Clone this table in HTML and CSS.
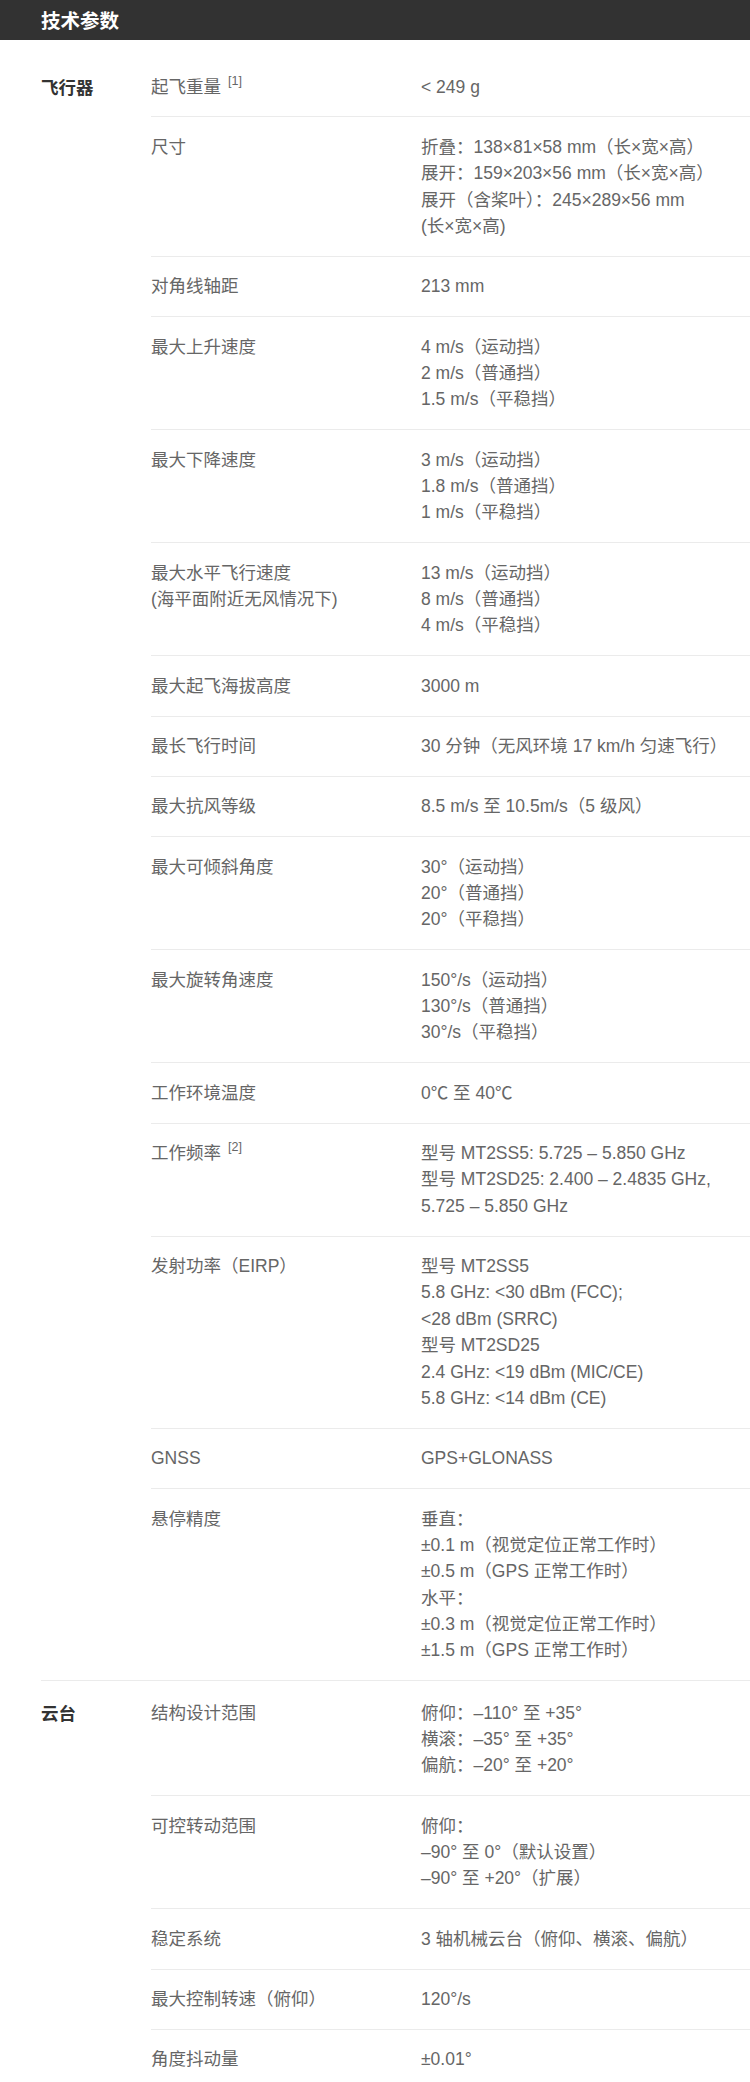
FILE: index.html
```html
<!DOCTYPE html>
<html lang="zh-cn">

<head>
    <meta charset="UTF-8">
    <meta name="viewport" content="width=device-width, initial-scale=1.0">
    <title>技术参数</title>
    <link rel="stylesheet" href="styles.css">
</head>

<body>
    <header class="specHead">技术参数</header>

    <div class="specBody">
        <!-- 飞行器 -->
        <section class="specGroup">
            <h3 class="groupName">飞行器</h3>
            <ul class="specList">
                <li>
                    <span class="specKey">起飞重量<sup>[1]</sup></span>
                    <span class="specVal">&lt; 249 g</span>
                </li>
                <li>
                    <span class="specKey">尺寸</span>
                    <span class="specVal">折叠：138×81×58 mm（长×宽×高）<br>展开：159×203×56 mm（长×宽×高）<br>展开（含桨叶）：245×289×56 mm<br>(长×宽×高)</span>
                </li>
                <li>
                    <span class="specKey">对角线轴距</span>
                    <span class="specVal">213 mm</span>
                </li>
                <li>
                    <span class="specKey">最大上升速度</span>
                    <span class="specVal">4 m/s（运动挡）<br>2 m/s（普通挡）<br>1.5 m/s（平稳挡）</span>
                </li>
                <li>
                    <span class="specKey">最大下降速度</span>
                    <span class="specVal">3 m/s（运动挡）<br>1.8 m/s（普通挡）<br>1 m/s（平稳挡）</span>
                </li>
                <li>
                    <span class="specKey">最大水平飞行速度<br>(海平面附近无风情况下)</span>
                    <span class="specVal">13 m/s（运动挡）<br>8 m/s（普通挡）<br>4 m/s（平稳挡）</span>
                </li>
                <li>
                    <span class="specKey">最大起飞海拔高度</span>
                    <span class="specVal">3000 m</span>
                </li>
                <li>
                    <span class="specKey">最长飞行时间</span>
                    <span class="specVal">30 分钟（无风环境 17 km/h 匀速飞行）</span>
                </li>
                <li>
                    <span class="specKey">最大抗风等级</span>
                    <span class="specVal">8.5 m/s 至 10.5m/s（5 级风）</span>
                </li>
                <li>
                    <span class="specKey">最大可倾斜角度</span>
                    <span class="specVal">30°（运动挡）<br>20°（普通挡）<br>20°（平稳挡）</span>
                </li>
                <li>
                    <span class="specKey">最大旋转角速度</span>
                    <span class="specVal">150°/s（运动挡）<br>130°/s（普通挡）<br>30°/s（平稳挡）</span>
                </li>
                <li>
                    <span class="specKey">工作环境温度</span>
                    <span class="specVal">0℃ 至 40℃</span>
                </li>
                <li>
                    <span class="specKey">工作频率<sup>[2]</sup></span>
                    <span class="specVal">型号 MT2SS5: 5.725 – 5.850 GHz<br>型号 MT2SD25: 2.400 – 2.4835 GHz,<br>5.725 – 5.850 GHz</span>
                </li>
                <li>
                    <span class="specKey">发射功率（EIRP）</span>
                    <span class="specVal">型号 MT2SS5<br>5.8 GHz: &lt;30 dBm (FCC);<br>&lt;28 dBm (SRRC)<br>型号 MT2SD25<br>2.4 GHz: &lt;19 dBm (MIC/CE)<br>5.8 GHz: &lt;14 dBm (CE)</span>
                </li>
                <li>
                    <span class="specKey">GNSS</span>
                    <span class="specVal">GPS+GLONASS</span>
                </li>
                <li>
                    <span class="specKey">悬停精度</span>
                    <span class="specVal">垂直：<br>±0.1 m（视觉定位正常工作时）<br>±0.5 m（GPS 正常工作时）<br>水平：<br>±0.3 m（视觉定位正常工作时）<br>±1.5 m（GPS 正常工作时）</span>
                </li>
            </ul>
        </section>

        <!-- 云台 -->
        <section class="specGroup">
            <h3 class="groupName">云台</h3>
            <ul class="specList">
                <li>
                    <span class="specKey">结构设计范围</span>
                    <span class="specVal">俯仰：–110° 至 +35°<br>横滚：–35° 至 +35°<br>偏航：–20° 至 +20°</span>
                </li>
                <li>
                    <span class="specKey">可控转动范围</span>
                    <span class="specVal">俯仰：<br>–90° 至 0°（默认设置）<br>–90° 至 +20°（扩展）</span>
                </li>
                <li>
                    <span class="specKey">稳定系统</span>
                    <span class="specVal">3 轴机械云台（俯仰、横滚、偏航）</span>
                </li>
                <li>
                    <span class="specKey">最大控制转速（俯仰）</span>
                    <span class="specVal">120°/s</span>
                </li>
                <li>
                    <span class="specKey">角度抖动量</span>
                    <span class="specVal">±0.01°</span>
                </li>
            </ul>
        </section>
    </div>
</body>

</html>
```

FILE: styles.css
```css
* {
    margin: 0;
    padding: 0;
    box-sizing: border-box;
}

body {
    background-color: #fff;
    font-family: "Liberation Sans", "Noto Sans CJK SC", sans-serif;
    color: #666;
}

.specHead {
    height: 40px;
    padding-left: 41px;
    background-color: #323232;
    color: #fff;
    font: 700 19.5px/40px "Noto Sans CJK SC", sans-serif;
}

.specBody {
    padding: 17px 0 0 41px;
}

.specGroup {
    display: grid;
    grid-template-columns: 110px 1fr;
}

.specGroup + .specGroup {
    border-top: 1px solid #ebebeb;
    padding-top: 2px;
}

.groupName {
    padding-top: 16.5px;
    font: 700 17.5px/26.35px "Noto Sans CJK SC", sans-serif;
    color: #333;
}

.specList {
    list-style-type: none;
}

.specList li {
    display: grid;
    grid-template-columns: 270px 1fr;
    padding: 16.5px 10px 16.5px 0;
    font-size: 17.5px;
    line-height: 26.35px;
}

.specList li + li {
    border-top: 1px solid #ebebeb;
}

.specKey,
.specVal {
    white-space: nowrap;
}

.specKey sup {
    font-size: 12.5px;
    line-height: 1;
    vertical-align: top;
    margin-left: 7px;
    position: relative;
    top: 1px;
}
```
